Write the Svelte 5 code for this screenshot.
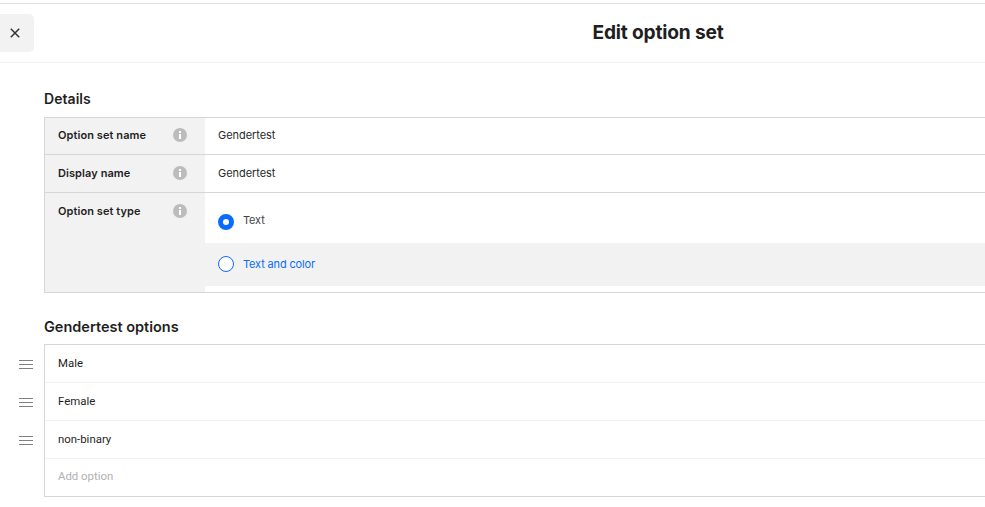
<script lang="ts">
  const fields = [
    { label: 'Option set name', value: 'Gendertest' },
    { label: 'Display name', value: 'Gendertest' }
  ];
  const options = ['Male', 'Female', 'non-binary'];
</script>

{#snippet info()}
  <svg class="info" width="14" height="14" viewBox="0 0 14 14" aria-hidden="true">
    <circle cx="7" cy="7" r="7" fill="#bcbcbc" />
    <rect x="6" y="6" width="2" height="5" fill="#fff" />
    <rect x="6" y="3" width="2" height="2" fill="#fff" />
  </svg>
{/snippet}

<div class="page">
  <header class="topbar">
    <button class="close" aria-label="Close">
      <svg width="10" height="10" viewBox="0 0 10 10" aria-hidden="true">
        <path d="M.8.8l8.4 8.4M9.2.8L.8 9.2" stroke="#333" stroke-width="1.5" fill="none" />
      </svg>
    </button>
    <h1>Edit option set</h1>
  </header>

  <main class="content">
    <h2 class="details-title">Details</h2>
    <div class="table">
      {#each fields as field}
        <div class="row">
          <div class="label"><span>{field.label}</span>{@render info()}</div>
          <div class="value">{field.value}</div>
        </div>
      {/each}
      <div class="row type-row">
        <div class="label"><span>Option set type</span>{@render info()}</div>
        <div class="radios">
          <div class="radio selected"><i></i><span>Text</span></div>
          <div class="radio hovered"><i></i><span>Text and color</span></div>
        </div>
      </div>
    </div>

    <h2 class="options-title">Gendertest options</h2>
    <div class="options-wrap">
      <div class="handles">
        {#each options as _}
          <div class="handle">
            <svg width="14" height="9" viewBox="0 0 14 9" aria-hidden="true">
              <path d="M0 .5h14M0 4.5h14M0 8.5h14" stroke="#808080" stroke-width="1" fill="none" />
            </svg>
          </div>
        {/each}
      </div>
      <div class="options">
        {#each options as option}
          <div class="option">{option}</div>
        {/each}
        <div class="option add">Add option</div>
      </div>
    </div>
  </main>
</div>

<style>
  :global(body) {
    overflow: hidden;
    background: #fff;
  }

  .page {
    width: 1316px;
    padding-top: 3px;
    font-family: Inter, "Noto Sans", sans-serif;
    color: #1f1f1f;
  }

  .topbar {
    display: flex;
    align-items: center;
    justify-content: center;
    position: relative;
    height: 58px;
    border-top: 1px solid #e3e3e3;
    border-bottom: 1px solid #f0f0f0;
  }

  .close {
    position: absolute;
    left: 0;
    top: 10px;
    width: 34px;
    height: 38px;
    padding: 0 5px 0 0;
    display: flex;
    align-items: center;
    justify-content: center;
    border: 0;
    border-radius: 0 5px 5px 0;
    background: #f2f2f2;
  }

  h1 {
    margin: 0;
    padding-bottom: 2px;
    font-size: 19.2px;
    font-weight: 700;
    letter-spacing: -0.2px;
  }

  h2 {
    margin: 0;
    font-size: 14px;
    line-height: 18px;
    font-weight: 600;
  }

  .content {
    padding-left: 44px;
  }

  .details-title {
    padding-top: 27px;
    padding-bottom: 9px;
    letter-spacing: 0.05px;
  }

  .table {
    border: 1px solid #d6d6d6;
    border-right: 0;
  }

  .row {
    display: flex;
    height: 36px;
    border-bottom: 1px solid #d6d6d6;
    font-size: 11px;
  }

  .row:nth-child(2) {
    height: 37px;
  }

  .row.type-row {
    height: 99px;
    border-bottom: 0;
  }

  .label {
    flex: 0 0 160px;
    box-sizing: border-box;
    display: flex;
    justify-content: space-between;
    align-items: center;
    padding: 0 18px 2px 13px;
    background: #f2f2f2;
    font-weight: 600;
    letter-spacing: 0.08px;
  }

  .type-row .label {
    align-items: flex-start;
    padding-top: 11px;
  }

  .value {
    display: flex;
    align-items: center;
    padding: 0 0 2px 13px;
    letter-spacing: -0.05px;
    color: #2a2a2a;
  }

  .radios {
    flex: 1;
    padding-top: 7px;
  }

  .radio {
    display: flex;
    align-items: center;
    gap: 9px;
    height: 43px;
    padding-left: 13px;
    letter-spacing: -0.15px;
    color: #444;
  }

  .radio span {
    padding-bottom: 2px;
  }

  .radio.selected span {
    padding-bottom: 4px;
  }

  .radio i {
    width: 16px;
    height: 16px;
    box-sizing: border-box;
    border-radius: 50%;
    background: #fff;
    border: 1px solid #0a6cff;
  }

  .radio.selected i {
    border: 5px solid #0a6cff;
  }

  .radio.hovered {
    background: #f2f2f2;
    color: #0a6cff;
  }

  .radio.hovered i {
    margin-top: -1px;
  }

  .options-title {
    padding-top: 25px;
    padding-bottom: 8px;
    font-size: 14.5px;
  }

  .options-wrap {
    position: relative;
  }

  .handles {
    position: absolute;
    left: -25px;
    top: 1px;
  }

  .handle {
    display: flex;
    align-items: center;
    height: 38px;
  }

  .options {
    border: 1px solid #d6d6d6;
    border-right: 0;
  }

  .option {
    display: flex;
    align-items: center;
    box-sizing: border-box;
    height: 38px;
    padding: 0 0 1px 13px;
    font-family: Roboto, sans-serif;
    font-size: 11.4px;
    border-bottom: 1px solid #f0f0f0;
  }

  .option.add {
    height: 37px;
    padding-bottom: 3px;
    border-bottom: 0;
    color: #b0b0b0;
  }
</style>
